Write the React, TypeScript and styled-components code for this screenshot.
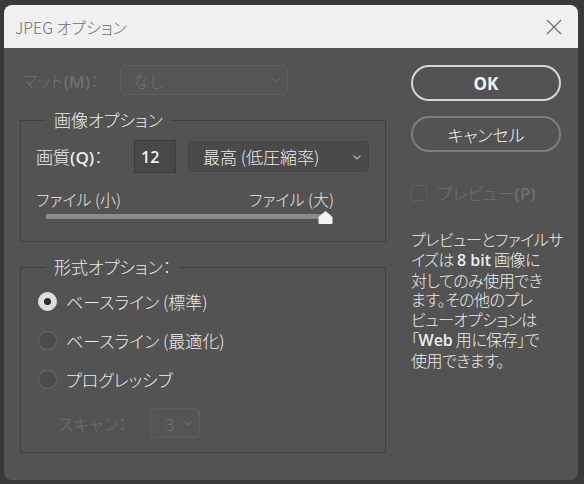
import React from "react";
import styled, { createGlobalStyle } from "styled-components";

const GlobalStyle = createGlobalStyle`
html, body {
  margin: 0;
  padding: 0;
  background: #3a3a3a;
  width: 584px;
  height: 484px;
  overflow: hidden;
}
* { box-sizing: border-box; }
`;

const FONT = `"Noto Sans CJK JP", "Noto Sans", sans-serif`;

const Page = styled.div`
padding: 5px 6px 4px 4px;
font-family: ${FONT};
font-feature-settings: "palt";
`;

const Window = styled.div`
width: 574px;
height: 475px;
border-radius: 8px;
overflow: hidden;
background: #535353;
display: flex;
flex-direction: column;
`;

const TitleBar = styled.div`
height: 43px;
background: #f0f0f0;
display: flex;
align-items: center;
justify-content: space-between;
padding: 0 16px 0 11px;
color: #6e6e6e;
font-size: 16px;
font-weight: 300;
`;

const CloseBtn = styled.svg`
width: 16px;
height: 16px;
`;

const Body = styled.div`
flex: 1;
display: flex;
padding: 17px 0 0 16px;
`;

const LeftCol = styled.div`
width: 366px;
display: flex;
flex-direction: column;
`;

const RightCol = styled.div`
margin-left: 25px;
width: 150px;
display: flex;
flex-direction: column;
`;

const Row = styled.div`
display: flex;
align-items: center;
`;

const Label = styled.span<{ $dim?: boolean }>`
font-size: 17px;
font-weight: 300;
color: ${(p) => (p.$dim ? "#6f6f6f" : "#ececec")};
white-space: nowrap;
`;

const Select = styled.div<{ $w: number; $h: number; $dim?: boolean }>`
width: ${(p) => p.$w}px;
height: ${(p) => p.$h}px;
border-radius: 4px;
border: 1px solid ${(p) => (p.$dim ? "#5f5f5f" : "#454545")};
background: ${(p) => (p.$dim ? "#555555" : "#4a4a4a")};
color: ${(p) => (p.$dim ? "#727272" : "#ececec")};
display: flex;
align-items: center;
justify-content: space-between;
padding: 0 6px 0 12px;
font-size: 17px;
font-weight: 300;
white-space: nowrap;
`;

const Chevron = styled.svg<{ $dim?: boolean }>`
width: 10px;
height: 10px;
flex: none;
stroke: ${(p) => (p.$dim ? "#6a6a6a" : "#b5b5b5")};
`;

const Group = styled.fieldset`
margin: 0;
border: 1px solid #414141;
padding: 0 15px;
min-width: 0;
`;

const Legend = styled.legend`
margin-left: 10px;
padding: 0 8px;
font-size: 17px;
font-weight: 300;
color: #ececec;
line-height: 22px;
`;

const NumInput = styled.div`
width: 42px;
height: 33px;
background: #484848;
border: 1px solid #3c3c3c;
color: #f2f2f2;
font-size: 16px;
display: flex;
align-items: center;
padding-left: 6px;
font-family: "Open Sans", ${FONT};
font-weight: 600;
`;

const SliderLabels = styled.div`
display: flex;
justify-content: space-between;
width: 298px;
font-size: 16px;
font-weight: 300;
color: #e6e6e6;
margin-top: 16px;
line-height: 20px;
`;

const Track = styled.div`
margin: 5px 0 0 10px;
width: 284px;
height: 5px;
background: #8b8b8b;
position: relative;
`;

const Thumb = styled.svg`
position: absolute;
right: -4px;
top: -4px;
width: 17px;
height: 15px;
`;

const RadioRow = styled.div`
display: flex;
align-items: center;
height: 39px;
gap: 9px;
padding-left: 2px;
`;

const RadioDot = styled.span<{ $on?: boolean }>`
width: 19px;
height: 19px;
border-radius: 50%;
flex: none;
background: ${(p) => (p.$on ? "#dedede" : "#4b4b4b")};
border: 1px solid ${(p) => (p.$on ? "#dedede" : "#6c6c6c")};
display: flex;
align-items: center;
justify-content: center;
&::after {
  content: "";
  display: ${(p) => (p.$on ? "block" : "none")};
  width: 7px;
  height: 7px;
  border-radius: 50%;
  background: #2e2e2e;
}
`;

const PillButton = styled.div<{ $primary?: boolean }>`
width: 150px;
height: 36px;
border-radius: 18px;
border: 2px solid ${(p) => (p.$primary ? "#d6d6d6" : "#7e7e7e")};
display: flex;
align-items: center;
justify-content: center;
color: #f4f4f4;
font-size: ${(p) => (p.$primary ? "17px" : "17px")};
font-weight: ${(p) => (p.$primary ? 700 : 300)};
font-family: ${(p) => (p.$primary ? `"Open Sans", ${FONT}` : FONT)};
`;

const CheckBox = styled.span`
width: 16px;
height: 16px;
border: 1px solid #5f5f5f;
background: #515151;
border-radius: 2px;
flex: none;
`;

const Note = styled.p`
margin: 25px 0 0 0;
font-size: 16px;
font-weight: 300;
letter-spacing: -0.5px;
line-height: 19.8px;
color: #ececec;
white-space: nowrap;
`;

const Latin = styled.span`
font-family: "Open Sans", ${FONT};
font-weight: 600;
letter-spacing: 0;
`;

function Caret({ dim }: { dim?: boolean }) {
  return (
    <Chevron $dim={dim} viewBox="0 0 10 10" fill="none" strokeWidth="1.1">
      <path d="M1.5 3.5 L5 7 L8.5 3.5" />
    </Chevron>
  );
}

export default function App() {
  return (
    <Page>
      <GlobalStyle />
      <Window>
        <TitleBar>
          <span>JPEG オプション</span>
          <CloseBtn viewBox="0 0 16 16" fill="none" stroke="#6e6e6e" strokeWidth="1.2">
            <path d="M1 1 L15 15 M15 1 L1 15" />
          </CloseBtn>
        </TitleBar>
        <Body>
          <LeftCol>
            <Row style={{ height: 30, gap: 0 }}>
              <Label $dim style={{ width: 100, paddingLeft: 2 }}>
                マット<Latin>(M)</Latin>：
              </Label>
              <Select $w={168} $h={30} $dim>
                <span>なし</span>
                <Caret dim />
              </Select>
            </Row>
            <Group style={{ marginTop: 14, height: 133 }}>
              <Legend>画像オプション</Legend>
              <Row style={{ marginTop: 9 }}>
                <Label style={{ width: 98 }}>
                  画質<Latin>(Q)</Latin>：
                </Label>
                <NumInput>12</NumInput>
                <Select $w={181} $h={31} style={{ marginLeft: 12, paddingLeft: 14 }}>
                  <span>最高 (低圧縮率)</span>
                  <Caret />
                </Select>
              </Row>
              <SliderLabels>
                <span>ファイル (小)</span>
                <span>ファイル (大)</span>
              </SliderLabels>
              <Track>
                <Thumb viewBox="0 0 17 15">
                  <path d="M8.5 1 L15.5 7 L15.5 13 Q15.5 14 14.5 14 L2.5 14 Q1.5 14 1.5 13 L1.5 7 Z" fill="#f2f2f2" />
                </Thumb>
              </Track>
            </Group>
            <Group style={{ marginTop: 14, height: 197 }}>
              <Legend>形式オプション：</Legend>
              <div style={{ marginTop: 4 }}>
                <RadioRow>
                  <RadioDot $on />
                  <Label>ベースライン (標準)</Label>
                </RadioRow>
                <RadioRow>
                  <RadioDot />
                  <Label>ベースライン (最適化)</Label>
                </RadioRow>
                <RadioRow>
                  <RadioDot />
                  <Label>プログレッシブ</Label>
                </RadioRow>
                <Row style={{ marginTop: 9, paddingLeft: 22 }}>
                  <Label $dim style={{ width: 92 }}>スキャン：</Label>
                  <Select $w={50} $h={30} $dim style={{ paddingLeft: 14 }}>
                    <span>3</span>
                    <Caret dim />
                  </Select>
                </Row>
              </div>
            </Group>
          </LeftCol>
          <RightCol>
            <PillButton $primary>OK</PillButton>
            <PillButton style={{ marginTop: 15 }}>キャンセル</PillButton>
            <Row style={{ marginTop: 28, gap: 10 }}>
              <CheckBox />
              <Label $dim>
                プレビュー<Latin>(P)</Latin>
              </Label>
            </Row>
            <Note>
              プレビューとファイルサ
              <br />
              イズは <Latin>8 bit</Latin> 画像に
              <br />
              対してのみ使用でき
              <br />
              ます。その他のプレ
              <br />
              ビューオプションは
              <br />
              「<Latin>Web</Latin> 用に保存」で
              <br />
              使用できます。
            </Note>
          </RightCol>
        </Body>
      </Window>
    </Page>
  );
}
